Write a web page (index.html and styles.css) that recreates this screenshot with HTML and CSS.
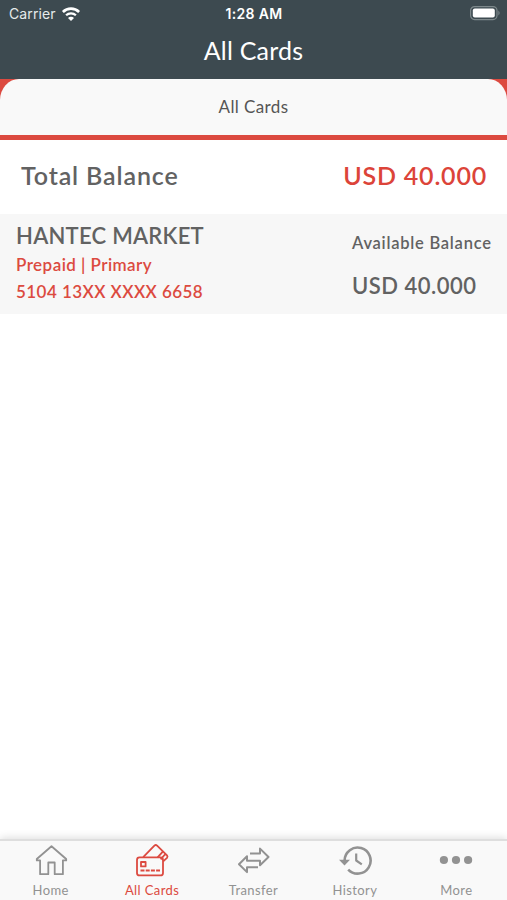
FILE: index.html
```html
<!DOCTYPE html>
<html lang="en">
<head>
    <meta charset="UTF-8">
    <meta name="viewport" content="width=device-width, initial-scale=1.0">
    <title>All Cards</title>
    <link rel="stylesheet" href="styles.css">
</head>
<body>

    <header class="header">
        <div class="status">
            <div class="carrier">
                <span>Carrier</span>
                <svg width="20" height="16" viewBox="0 0 20 16">
                    <path d="M1.9 6a11.5 11.5 0 0 1 16.2 0" fill="none" stroke="#fff" stroke-width="2.6"/>
                    <path d="M5.1 9.3a7 7 0 0 1 9.8 0" fill="none" stroke="#fff" stroke-width="2.3"/>
                    <path d="M10 15L7 11.9a4.2 4.2 0 0 1 6 0z" fill="#fff"/>
                </svg>
            </div>
            <div class="clock">1:28 AM</div>
            <div class="battery">
                <svg width="31" height="15" viewBox="0 0 31 15">
                    <rect x=".6" y=".6" width="26.4" height="13" rx="4" fill="none" stroke="#7d888b" stroke-width="1.2"/>
                    <rect x="2.8" y="2.6" width="22" height="9" rx="2" fill="#fff"/>
                    <path d="M28.4 4.6q2.4 2.5 0 5z" fill="#7d888b"/>
                </svg>
            </div>
        </div>
        <h1 class="title">All Cards</h1>
    </header>

    <div class="tabs">
        <div class="tab">All Cards</div>
    </div>

    <main class="content">
        <div class="total">
            <span class="total-label">Total Balance</span>
            <span class="total-amount">USD 40.000</span>
        </div>

        <div class="card">
            <div class="card-info">
                <p class="card-name">HANTEC MARKET</p>
                <p class="card-type">Prepaid | Primary</p>
                <p class="card-number">5104 13XX XXXX 6658</p>
            </div>
            <div class="card-balance">
                <p class="available">Available Balance</p>
                <p class="amount">USD 40.000</p>
            </div>
        </div>
    </main>

    <nav class="nav">
        <a class="item">
            <svg width="36" height="36" viewBox="0 0 36 36">
                <path d="M18.5 4.2L3.8 17v1.4h3.3v13.8h8.2V20.5h6.4v11.7h8.2V18.4h3.3V17z"/>
            </svg>
            <span>Home</span>
        </a>
        <a class="item active">
            <svg width="36" height="36" viewBox="0 0 36 36">
                <rect x="3" y="15.4" width="26" height="18" rx="2.5"/>
                <rect x="7" y="20" width="4.6" height="4.4"/>
                <path d="M6.5 28.5h19.5" stroke-dasharray="4 1.2"/>
                <path d="M9.2 15.2L20.4 3.6q1.4-1.2 2.7 0L33 13.4q1 1.2 0 2.4l-3.8 3.5M23.6 15.4l5-5.6M26.6 17.4l4.8-5.4"/>
            </svg>
            <span>All Cards</span>
        </a>
        <a class="item">
            <svg width="36" height="36" viewBox="0 0 36 36">
                <path d="M14 11.5h10V6.6l8.5 8.4-8.5 8.2v-4.4H11v-4.6l-8 8.1 8 7.8v-4.8h11" stroke-width="2"/>
            </svg>
            <span>Transfer</span>
        </a>
        <a class="item">
            <svg width="36" height="36" viewBox="0 0 36 36">
                <path d="M7.6 18.5A13 13 0 1 1 11.2 27.6" stroke-width="2.6"/>
                <path d="M2 17.8h11l-5.5 5.6z" fill="currentColor" stroke="none"/>
                <path d="M19.2 11.5v7l5.6 3.8" stroke-width="2.2"/>
            </svg>
            <span>History</span>
        </a>
        <a class="item">
            <svg width="36" height="36" viewBox="0 0 36 36">
                <g fill="currentColor" stroke="none">
                    <circle cx="5.9" cy="18" r="4.1"/>
                    <circle cx="18" cy="18" r="4.1"/>
                    <circle cx="30.1" cy="18" r="4.1"/>
                </g>
            </svg>
            <span>More</span>
        </a>
    </nav>

</body>
</html>
```
FILE: styles.css
```css
* {
    box-sizing: border-box;
}

html, body {
    margin: 0;
    padding: 0;
}

h1, p {
    margin: 0;
    font-weight: inherit;
}

body {
    height: 100vh;
    display: flex;
    flex-direction: column;
    overflow: hidden;
    background-color: #fff;
    font-family: Lato, "Liberation Sans", sans-serif;
    color: #626262;
}

/* top bar */
.header {
    height: 79px;
    background-color: #3d4a50;
    color: #fff;
}

.status {
    height: 27px;
    padding: 0 6px 0 9px;
    display: grid;
    grid-template-columns: 1fr auto 1fr;
    align-items: center;
    font-family: Inter, sans-serif;
    font-size: 14px;
    line-height: 27px;
}

.carrier {
    display: flex;
    align-items: center;
    gap: 5px;
    color: #e6eaeb;
    letter-spacing: 0.1px;
}

.clock {
    margin-right: 2px;
    font-weight: 600;
    letter-spacing: 0.35px;
}

.battery {
    display: flex;
    justify-content: flex-end;
}

.title {
    text-align: center;
    font-size: 25px;
    line-height: 47px;
    letter-spacing: 0.2px;
}

.tabs {
    height: 61px;
    background-color: #dc4a40;
    border-bottom: 5px solid #dc4a40;
}

.tab {
    height: 56px;
    border-radius: 19px 19px 0 0 / 21px 21px 0 0;
    background-color: #f9f9f9;
    text-align: center;
    font-size: 17px;
    line-height: 55px;
    letter-spacing: 0.4px;
    color: #555;
}

.content {
    flex: 1;
}

.total {
    height: 74px;
    padding: 0 20px 0 21px;
    display: flex;
    justify-content: space-between;
    font-size: 25px;
    line-height: 71px;
    font-weight: 600;
}

.total-label {
    letter-spacing: 0.87px;
}

.total-amount {
    color: #dc4439;
    letter-spacing: 0.8px;
}

.card {
    height: 100px;
    padding: 0 15px 0 16px;
    display: flex;
    justify-content: space-between;
    background-color: #f7f7f7;
    font-weight: 600;
}

.card-info {
    padding-top: 7px;
}

.card-name {
    font-size: 22px;
    line-height: 30px;
    letter-spacing: 0.25px;
}

.card-type,
.card-number {
    font-size: 17px;
    line-height: 27px;
    letter-spacing: 0.45px;
    color: #dc4a40;
}

.card-balance {
    width: 140px;
    padding-top: 15px;
    white-space: nowrap;
}

.available {
    font-size: 16.5px;
    line-height: 28px;
    letter-spacing: 0.75px;
}

.amount {
    padding-top: 14px;
    font-size: 22px;
    line-height: 30px;
    letter-spacing: 0.5px;
}

/* bottom menu */
.nav {
    height: 61px;
    display: flex;
    background-color: #f9f9f9;
    border-top: 2px solid #dedede;
    box-shadow: 0 -1px 8px rgba(0, 0, 0, 0.14);
}

.item {
    flex: 1;
    display: flex;
    flex-direction: column;
    align-items: center;
    gap: 2px;
    padding-top: 1px;
    font-size: 13px;
    line-height: 20px;
    letter-spacing: 0.4px;
    color: #929292;
}

.item svg {
    display: block;
    flex-shrink: 0;
    fill: none;
    stroke: currentColor;
    stroke-width: 1.8;
    stroke-linejoin: round;
}

.active {
    color: #dc4a40;
}
```
